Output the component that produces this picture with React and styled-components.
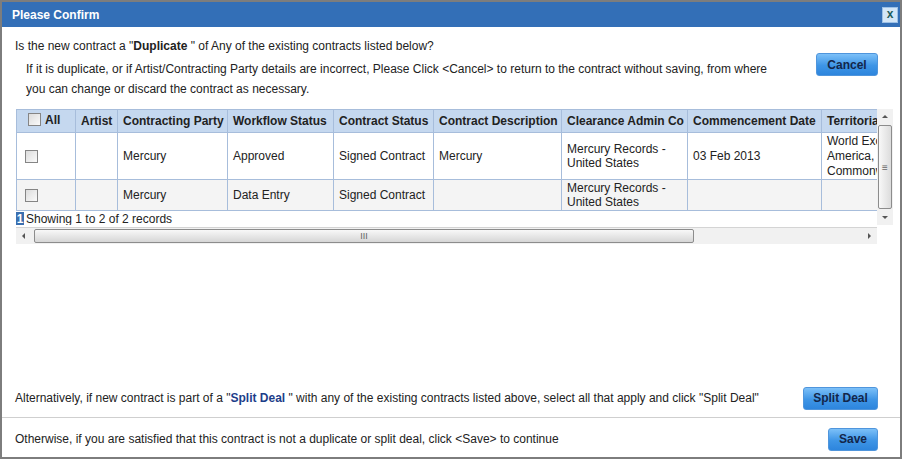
import React from 'react'
import styled, { createGlobalStyle } from 'styled-components'

const Global = createGlobalStyle`
  html, body { margin: 0; padding: 0; background: #fff; }
  body { font-family: "Liberation Sans", Arial, sans-serif; font-size: 12px; color: #222; }
`

const Win = styled.div`
  width: 902px;
  height: 459px;
  box-sizing: border-box;
  border: 2px solid #7d7d7d;
  display: flex;
  flex-direction: column;
  background: #fff;
`

const TitleBar = styled.div`
  height: 25px;
  flex: none;
  background: #336fb7;
  display: flex;
  align-items: center;
  justify-content: space-between;
  padding: 0 2px 0 10px;
  color: #fff;
  font-weight: bold;
  font-size: 12px;
`

const CloseBtn = styled.div`
  width: 14px;
  height: 14px;
  margin-top: 1px;
  border: 1px solid #9cc0e6;
  background: #d3e6f7;
  color: #1d5c5c;
  font-weight: bold;
  font-size: 12px;
  line-height: 13px;
  text-align: center;
`

const Top = styled.div`
  display: flex;
  justify-content: space-between;
  padding: 10px 22px 0 13px;
`

const Intro = styled.div`
  line-height: 18px;
`

const SubLine = styled.div`
  padding-left: 11px;
  line-height: 20px;
  margin-top: ${p => p.$first ? '4px' : '0'};
`

const Btn = styled.button`
  font-family: "Liberation Sans", Arial, sans-serif;
  font-size: 12px;
  font-weight: bold;
  color: #13264a;
  height: 23px;
  width: ${p => p.$w}px;
  padding: 0;
  border: 1px solid #4f95dc;
  border-radius: 3px;
  background: linear-gradient(#7cc0f8, #3e95e6 55%, #2d85dd);
  align-self: ${p => p.$top ? 'flex-start' : 'center'};
  margin-top: ${p => p.$top ? '16px' : '0'};
  cursor: pointer;
`

const Frame = styled.div`
  margin: 10px 0 0 14px;
  width: 877px;
  display: flex;
  flex-direction: column;
  gap: 2px;
`

const ScrollRow = styled.div`
  display: flex;
  height: 116px;
`

const Viewport = styled.div`
  width: 861px;
  overflow: hidden;
`

const Grid = styled.table`
  border-collapse: collapse;
  table-layout: fixed;
  width: 955px;
`

const Th = styled.th`
  background: #c5d8ef;
  border: 1px solid #a7bddb;
  height: 22px;
  padding: 0 5px;
  text-align: left;
  font-size: 12px;
  font-weight: bold;
  color: #222;
  white-space: nowrap;
  overflow: hidden;
`

const Td = styled.td`
  border: 1px solid #a7bddb;
  background: ${p => p.$alt ? '#f4f4f4' : '#fff'};
  height: ${p => p.$h}px;
  padding: 0 5px;
  line-height: 14px;
  vertical-align: ${p => p.$top ? 'top' : 'middle'};
  padding-top: ${p => p.$top ? '1px' : '0'};
  white-space: nowrap;
  overflow: hidden;
`

const CheckCell = styled(Td)`
  padding-left: 8px;
`

const Check = styled.span`
  display: inline-block;
  width: 11px;
  height: 11px;
  border: 1px solid #858585;
  background: linear-gradient(135deg, #dcdcdc, #fafafa);
  vertical-align: middle;
`

const AllLabel = styled.span`
  display: inline-flex;
  align-items: center;
  gap: 4px;
  padding-left: 11px;
`

const Territory = styled.div`
  line-height: 15px;
`

const Footer = styled.div`
  display: flex;
  align-items: center;
  height: 15px;
  gap: 2px;
`

const Page = styled.span`
  background: #3b6fb0;
  color: #fff;
  font-weight: bold;
  width: 8px;
  text-align: center;
  line-height: 14px;
`

const VScroll = styled.div`
  width: 16px;
  background: #f1f1f1;
  display: flex;
  flex-direction: column;
  align-items: center;
`

const Arrow = styled.div`
  width: 0;
  height: 0;
  border: 3px solid transparent;
  ${p => p.$dir === 'up' && 'border-bottom: 3px solid #555; border-top-width: 0;'}
  ${p => p.$dir === 'down' && 'border-top: 3px solid #555; border-bottom-width: 0;'}
  ${p => p.$dir === 'left' && 'border-right: 3px solid #555; border-left-width: 0;'}
  ${p => p.$dir === 'right' && 'border-left: 3px solid #555; border-right-width: 0;'}
`

const ArrowBox = styled.div`
  width: 15px;
  height: 15px;
  display: flex;
  align-items: center;
  justify-content: center;
  flex: none;
`

const VThumb = styled.div`
  width: 12px;
  flex: 1;
  margin: 1px 0;
  border: 1px solid #8c8c8c;
  border-radius: 2px;
  background: linear-gradient(90deg, #f8f8f8, #dcdcdc);
  display: flex;
  align-items: center;
  justify-content: center;
  color: #666;
  font-size: 10px;
`

const HScroll = styled.div`
  width: 861px;
  height: 16px;
  background: #f1f1f1;
  border-top: 1px solid #d4d4d4;
  display: flex;
  align-items: center;
`

const HThumb = styled.div`
  width: 658px;
  height: 12px;
  margin-left: 3px;
  border: 1px solid #8c8c8c;
  border-radius: 2px;
  background: linear-gradient(#f8f8f8, #d6d6d6);
  display: flex;
  align-items: center;
  justify-content: center;
  color: #666;
  font-size: 9px;
  letter-spacing: 0;
`

const Filler = styled.div`
  flex: 1;
`

const Line = styled.div`
  box-sizing: border-box;
  flex: none;
  display: flex;
  justify-content: space-between;
  align-items: center;
  padding: ${p => p.$pt}px 22px 0 13px;
  height: ${p => p.$h}px;
  border-top: ${p => p.$sep ? '1px solid #cfcfcf' : 'none'};
`

const Em = styled.b`
  color: ${p => p.$blue ? '#1d3d8a' : '#222'};
`

const cols = [59, 42, 110, 106, 100, 128, 126, 134, 150]

const rows = [
  { party: 'Mercury', wf: 'Approved', status: 'Signed Contract', desc: 'Mercury', date: '03 Feb 2013', terr: ['World Exclusive', 'America, Canada', 'Commonwealth'], h: 45 },
  { party: 'Mercury', wf: 'Data Entry', status: 'Signed Contract', desc: '', date: '', terr: [], h: 30, alt: true },
]

export default function App() {
  return (
    <Win>
      <Global />
      <TitleBar>
        Please Confirm
        <CloseBtn>x</CloseBtn>
      </TitleBar>

      <Top>
        <Intro>
          <div>Is the new contract a "<Em>Duplicate </Em>" of Any of the existing contracts listed below?</div>
          <SubLine $first>If it is duplicate, or if Artist/Contracting Party details are incorrect, Please Click &lt;Cancel&gt; to return to the contract without saving, from where</SubLine>
          <SubLine>you can change or discard the contract as necessary.</SubLine>
        </Intro>
        <Btn $w={62} $top>Cancel</Btn>
      </Top>

      <Frame>
        <ScrollRow>
          <Viewport>
            <Grid>
              <colgroup>
                {cols.map((w, i) => <col key={i} style={{ width: w }} />)}
              </colgroup>
              <thead>
                <tr>
                  <Th style={{ padding: 0 }}><AllLabel><Check />All</AllLabel></Th>
                  <Th>Artist</Th>
                  <Th>Contracting Party</Th>
                  <Th>Workflow Status</Th>
                  <Th>Contract Status</Th>
                  <Th>Contract Description</Th>
                  <Th>Clearance Admin Co</Th>
                  <Th>Commencement Date</Th>
                  <Th>Territorial</Th>
                </tr>
              </thead>
              <tbody>
                {rows.map((r, i) => (
                  <tr key={i}>
                    <CheckCell $h={r.h} $alt={r.alt}><Check /></CheckCell>
                    <Td $alt={r.alt}></Td>
                    <Td $alt={r.alt}>{r.party}</Td>
                    <Td $alt={r.alt}>{r.wf}</Td>
                    <Td $alt={r.alt}>{r.status}</Td>
                    <Td $alt={r.alt}>{r.desc}</Td>
                    <Td $alt={r.alt}>Mercury Records -<br />United States</Td>
                    <Td $alt={r.alt}>{r.date}</Td>
                    <Td $alt={r.alt} $top={r.terr.length > 0}>
                      {r.terr.map((t, j) => <Territory key={j}>{t}</Territory>)}
                    </Td>
                  </tr>
                ))}
              </tbody>
            </Grid>
            <Footer>
              <Page>1</Page>
              Showing 1 to 2 of 2 records
            </Footer>
          </Viewport>
          <VScroll>
            <ArrowBox><Arrow $dir="up" /></ArrowBox>
            <VThumb>≡</VThumb>
            <ArrowBox><Arrow $dir="down" /></ArrowBox>
          </VScroll>
        </ScrollRow>
        <HScroll>
          <ArrowBox><Arrow $dir="left" /></ArrowBox>
          <HThumb>III</HThumb>
          <Filler />
          <ArrowBox><Arrow $dir="right" /></ArrowBox>
        </HScroll>
      </Frame>

      <Filler />

      <Line $h={40} $pt={2}>
        <span>Alternatively, if new contract is part of a "<Em $blue>Split Deal </Em>" with any of the existing contracts listed above, select all that apply and click "Split Deal"</span>
        <Btn $w={75}>Split Deal</Btn>
      </Line>
      <Line $h={40} $pt={3} $sep>
        <span>Otherwise, if you are satisfied that this contract is not a duplicate or split deal, click &lt;Save&gt; to continue</span>
        <Btn $w={50}>Save</Btn>
      </Line>
    </Win>
  )
}
